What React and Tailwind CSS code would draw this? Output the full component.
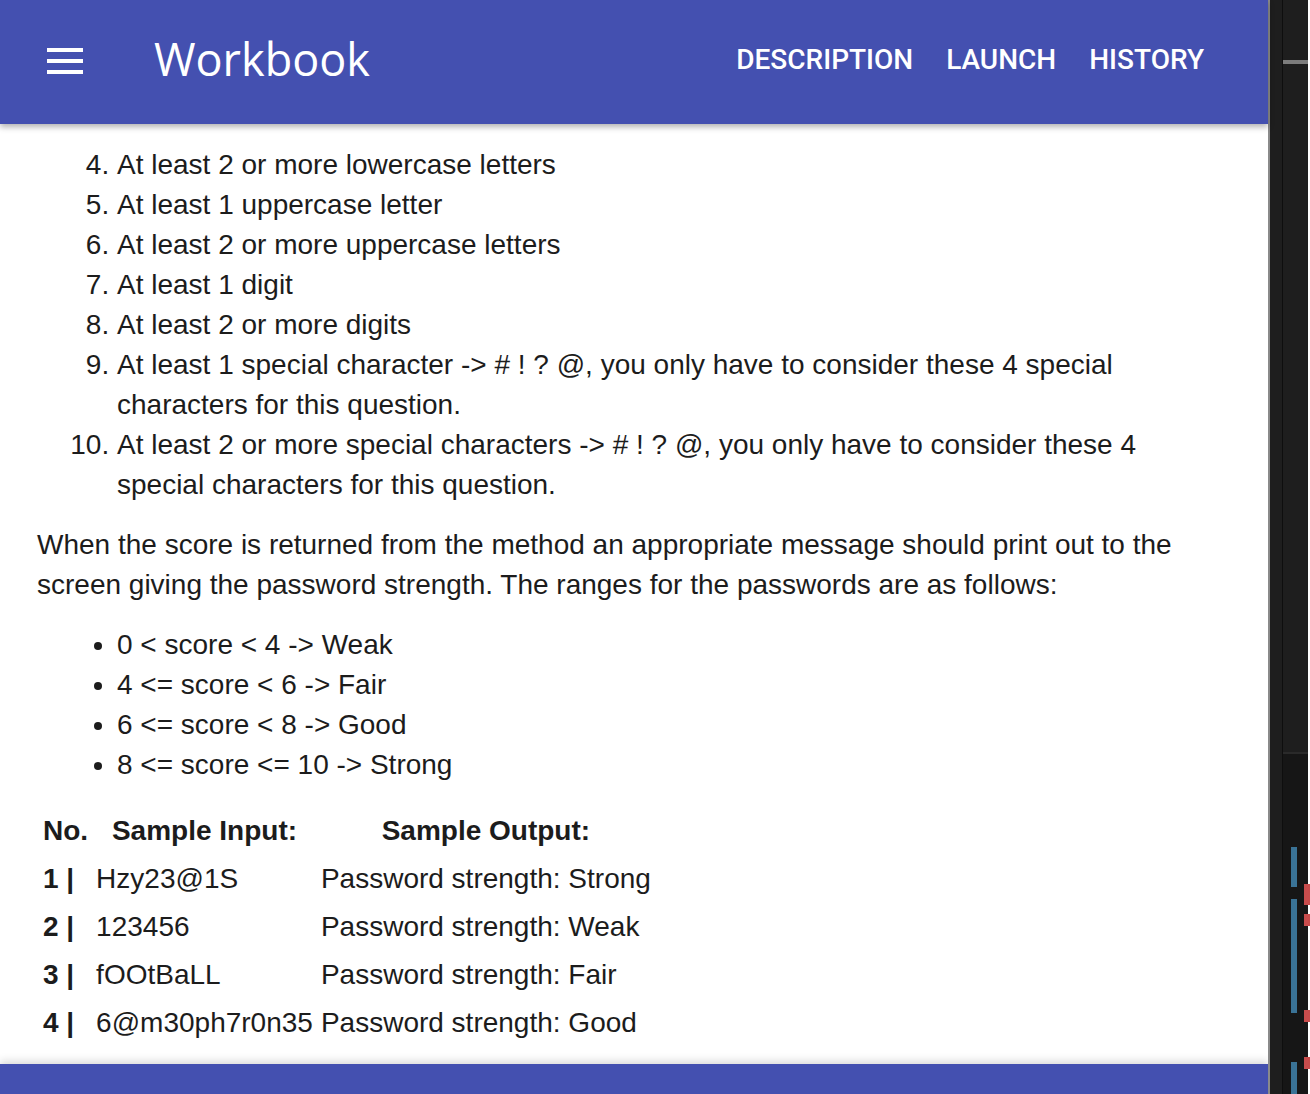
import React from 'react'

const rules = [
  'At least 2 or more lowercase letters',
  'At least 1 uppercase letter',
  'At least 2 or more uppercase letters',
  'At least 1 digit',
  'At least 2 or more digits',
  'At least 1 special character -> # ! ? @, you only have to consider these 4 special characters for this question.',
  'At least 2 or more special characters -> # ! ? @, you only have to consider these 4 special characters for this question.',
]

const ranges = [
  '0 < score < 4 -> Weak',
  '4 <= score < 6 -> Fair',
  '6 <= score < 8 -> Good',
  '8 <= score <= 10 -> Strong',
]

const samples = [
  ['1', 'Hzy23@1S', 'Password strength: Strong'],
  ['2', '123456', 'Password strength: Weak'],
  ['3', 'fOOtBaLL', 'Password strength: Fair'],
  ['4', '6@m30ph7r0n35', 'Password strength: Good'],
]

const Header = () => (
  <header className="relative z-10 flex h-[124px] shrink-0 items-center bg-[#4450b0] shadow-[0_3px_6px_rgba(0,0,0,0.3)]">
    <button className="ml-[47px] mb-[2px] flex w-[36px] flex-col gap-[7px]">
      <span className="h-[4px] w-full bg-white" />
      <span className="h-[4px] w-full bg-white" />
      <span className="h-[4px] w-full bg-white" />
    </button>
    <h1 className="ml-[71px] pb-[8px] font-['Open_Sans',sans-serif] text-[45px] leading-none text-white">
      Workbook
    </h1>
    <nav className="ml-auto mr-[64px] flex gap-[33px] pb-[5px] font-['Roboto',sans-serif] text-[28px] font-medium text-white">
      <a>DESCRIPTION</a>
      <a>LAUNCH</a>
      <a>HISTORY</a>
    </nav>
  </header>
)

const Content = () => (
  <main className="flex-1 overflow-hidden bg-white pl-[37px] pr-[50px] pt-[21px] font-['Liberation_Sans',Arial,sans-serif] text-[28px] leading-[40px] text-[#1c1c1c]">
    {/* requirement list, continues from 4 */}
    <ol start={4} className="list-decimal pl-[80px]">
      {rules.map((r, i) => (
        <li key={i}>{r}</li>
      ))}
    </ol>

    <p className="mt-[20px]">
      When the score is returned from the method an appropriate message should print out to the
      screen giving the password strength. The ranges for the passwords are as follows:
    </p>

    <ul className="mt-[20px] list-disc pl-[80px]">
      {ranges.map((r, i) => (
        <li key={i}>{r}</li>
      ))}
    </ul>

    {/* samples */}
    <table className="mt-[22px] ml-[6px] border-separate border-spacing-0">
      <thead>
        <tr className="h-[48px]">
          <th className="pr-[4px] text-left">No.</th>
          <th className="px-[4px] text-center">Sample Input:</th>
          <th className="px-[4px] text-center">Sample Output:</th>
        </tr>
      </thead>
      <tbody>
        {samples.map(([n, input, output]) => (
          <tr key={n} className="h-[48px]">
            <td className="pr-[4px] font-bold">{n} |</td>
            <td className="px-[4px]">{input}</td>
            <td className="px-[4px]">{output}</td>
          </tr>
        ))}
      </tbody>
    </table>
  </main>
)

const Sidebar = () => (
  <aside className="relative flex w-[40px] shrink-0 border-l-[2px] border-[#8a8a8a] bg-[#1e1e1e]">
    <div className="w-[13px] border-r border-[#0e0e0e]" />
    <div className="flex flex-1 flex-col">
      <div className="mt-[60px] h-[4px] bg-[#7c7c7c]" />
      <div className="mt-[688px] flex-1 border-t-[2px] border-[#2a2a2a] bg-[#161616]" />
    </div>
    {/* overview ruler marks */}
    <span className="absolute left-[21px] top-[847px] h-[40px] w-[6px] bg-[#3a7396]" />
    <span className="absolute left-[21px] top-[899px] h-[114px] w-[6px] bg-[#3a7396]" />
    <span className="absolute left-[21px] top-[1062px] h-[32px] w-[6px] bg-[#3a7396]" />
    <span className="absolute left-[34px] top-[884px] h-[21px] w-[6px] bg-[#c84c4c]" />
    <span className="absolute left-[34px] top-[914px] h-[12px] w-[6px] bg-[#c84c4c]" />
    <span className="absolute left-[34px] top-[1010px] h-[12px] w-[6px] bg-[#c84c4c]" />
    <span className="absolute left-[34px] top-[1057px] h-[12px] w-[6px] bg-[#c84c4c]" />
  </aside>
)

export default function App() {
  return (
    <div className="flex h-[1094px] w-[1310px] overflow-hidden">
      <div className="flex w-[1268px] shrink-0 flex-col">
        <Header />
        <Content />
        <div className="relative h-[30px] shrink-0 bg-[#4450b0] shadow-[0_-3px_8px_rgba(0,0,0,0.15)]" />
      </div>
      <Sidebar />
    </div>
  )
}
